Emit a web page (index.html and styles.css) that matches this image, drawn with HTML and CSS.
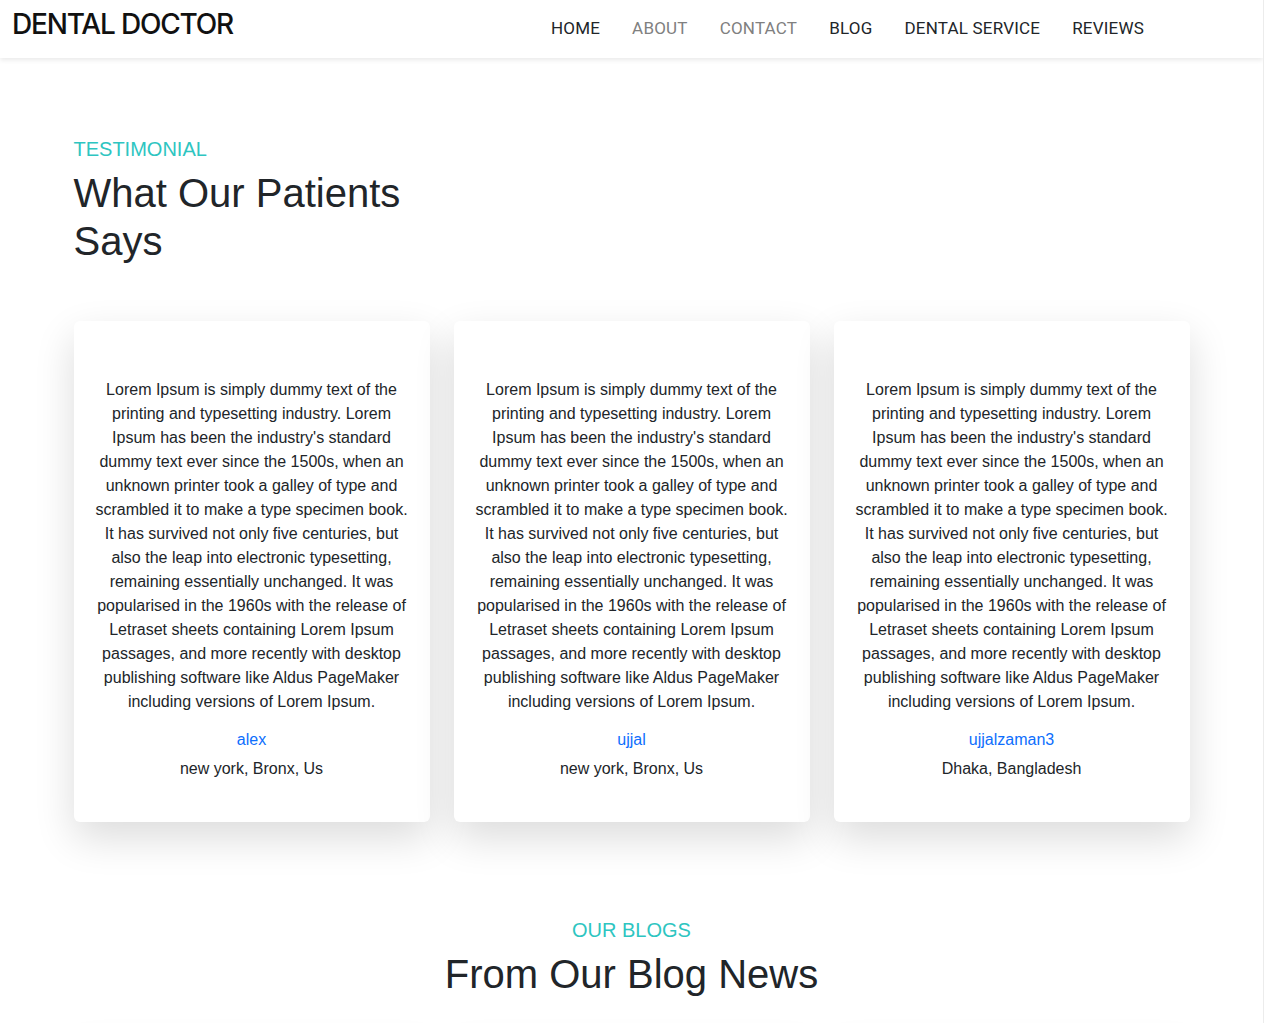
FILE: index.html
```html
<!DOCTYPE html>
<html lang="en">
<head>
<meta charset="utf-8">
<title>Dental Doctor</title>
<link rel="stylesheet" href="styles.css">
</head>
<body>
<header class="site-header">
  <a class="brand" href="#">DENTAL DOCTOR</a>
  <nav class="main-nav">
    <a class="nav-link" href="#">HOME</a>
    <a class="nav-link muted" href="#">ABOUT</a>
    <a class="nav-link muted" href="#">CONTACT</a>
    <a class="nav-link" href="#">BLOG</a>
    <a class="nav-link" href="#">DENTAL SERVICE</a>
    <a class="nav-link" href="#">REVIEWS</a>
  </nav>
</header>
<main>
  <section class="testimonials">
    <div class="container">
      <div class="section-head">
        <p class="eyebrow">TESTIMONIAL</p>
        <h2 class="section-title">What Our Patients Says</h2>
      </div>
      <div class="card-grid">
        <article class="review-card">
          <p class="review-text">Lorem Ipsum is simply dummy text of the printing and typesetting industry. Lorem Ipsum has been the industry's standard dummy text ever since the 1500s, when an unknown printer took a galley of type and scrambled it to make a type specimen book. It has survived not only five centuries, but also the leap into electronic typesetting, remaining essentially unchanged. It was popularised in the 1960s with the release of Letraset sheets containing Lorem Ipsum passages, and more recently with desktop publishing software like Aldus PageMaker including versions of Lorem Ipsum.</p>
          <a class="review-name" href="#">alex</a>
          <p class="review-place">new york, Bronx, Us</p>
        </article>
        <article class="review-card">
          <p class="review-text">Lorem Ipsum is simply dummy text of the printing and typesetting industry. Lorem Ipsum has been the industry's standard dummy text ever since the 1500s, when an unknown printer took a galley of type and scrambled it to make a type specimen book. It has survived not only five centuries, but also the leap into electronic typesetting, remaining essentially unchanged. It was popularised in the 1960s with the release of Letraset sheets containing Lorem Ipsum passages, and more recently with desktop publishing software like Aldus PageMaker including versions of Lorem Ipsum.</p>
          <a class="review-name" href="#">ujjal</a>
          <p class="review-place">new york, Bronx, Us</p>
        </article>
        <article class="review-card">
          <p class="review-text">Lorem Ipsum is simply dummy text of the printing and typesetting industry. Lorem Ipsum has been the industry's standard dummy text ever since the 1500s, when an unknown printer took a galley of type and scrambled it to make a type specimen book. It has survived not only five centuries, but also the leap into electronic typesetting, remaining essentially unchanged. It was popularised in the 1960s with the release of Letraset sheets containing Lorem Ipsum passages, and more recently with desktop publishing software like Aldus PageMaker including versions of Lorem Ipsum.</p>
          <a class="review-name" href="#">ujjalzaman3</a>
          <p class="review-place">Dhaka, Bangladesh</p>
        </article>
      </div>
    </div>
  </section>
  <section class="blogs">
    <div class="container">
      <div class="blogs-head">
        <p class="eyebrow">OUR BLOGS</p>
        <h2 class="section-title">From Our Blog News</h2>
      </div>
      <div class="card-grid blog-grid">
        <article class="blog-card"></article>
        <article class="blog-card"></article>
        <article class="blog-card"></article>
      </div>
    </div>
  </section>
</main>
</body>
</html>
```

FILE: styles.css
```css
* {
  box-sizing: border-box;
}

html {
  border-right: 1px solid #ececec;
}

body {
  margin: 0;
  background: #ffffff;
  color: #212529;
  font-family: "Liberation Sans", Arial, sans-serif;
  font-size: 16px;
  line-height: 24px;
}

a {
  text-decoration: none;
}

/* Header */
.site-header {
  display: flex;
  align-items: center;
  height: 58px;
  padding: 0 12px;
  background: #ffffff;
  box-shadow: 0 2px 5px rgba(0, 0, 0, 0.09);
  position: relative;
  z-index: 2;
}

.brand {
  align-self: flex-start;
  font-family: Inter, "Noto Sans", sans-serif;
  font-weight: 500;
  font-size: 28px;
  line-height: 48px;
  letter-spacing: -1.2px;
  color: #111111;
}

.main-nav {
  display: flex;
  margin-left: auto;
  margin-right: 107px;
  column-gap: 32px;
  padding-bottom: 3px;
}

.nav-link {
  font-family: Roboto, "Liberation Sans", sans-serif;
  font-size: 17px;
  line-height: 24px;
  letter-spacing: 0.2px;
  color: #212529;
}

.nav-link.muted {
  color: #808080;
}

/* Layout */
.container {
  width: 1116px;
  margin: 0 auto;
}

.eyebrow {
  margin: 0;
  font-size: 20px;
  line-height: 30px;
  color: #2ec5c1;
}

.section-title {
  margin: 5px 0 0;
  font-size: 40px;
  line-height: 48px;
  font-weight: 400;
  color: #212529;
}

/* Testimonials */
.testimonials {
  padding: 76px 0 47px;
}

.section-head {
  width: 356px;
}

.card-grid {
  display: grid;
  grid-template-columns: repeat(3, 1fr);
  gap: 24px;
  margin-top: 56px;
}

.review-card {
  background: #ffffff;
  border-radius: 6px;
  padding: 57px 20px 41px;
  text-align: center;
  box-shadow: 0 16px 40px rgba(0, 0, 0, 0.14);
}

.review-text {
  margin: 0 0 14px;
}

.review-name {
  display: block;
  margin-bottom: 5px;
  color: #0d6efd;
}

.review-place {
  margin: 0;
}

/* Blogs */
.blogs {
  padding: 46px 0 60px;
}

.blogs-head {
  text-align: center;
}

.blogs-head .section-title {
  margin-top: 5px;
}

.blog-grid {
  margin-top: 42px;
}

.blog-card {
  height: 420px;
  background: #ffffff;
  border-radius: 6px;
  box-shadow: 0 16px 40px rgba(0, 0, 0, 0.14);
}
```
